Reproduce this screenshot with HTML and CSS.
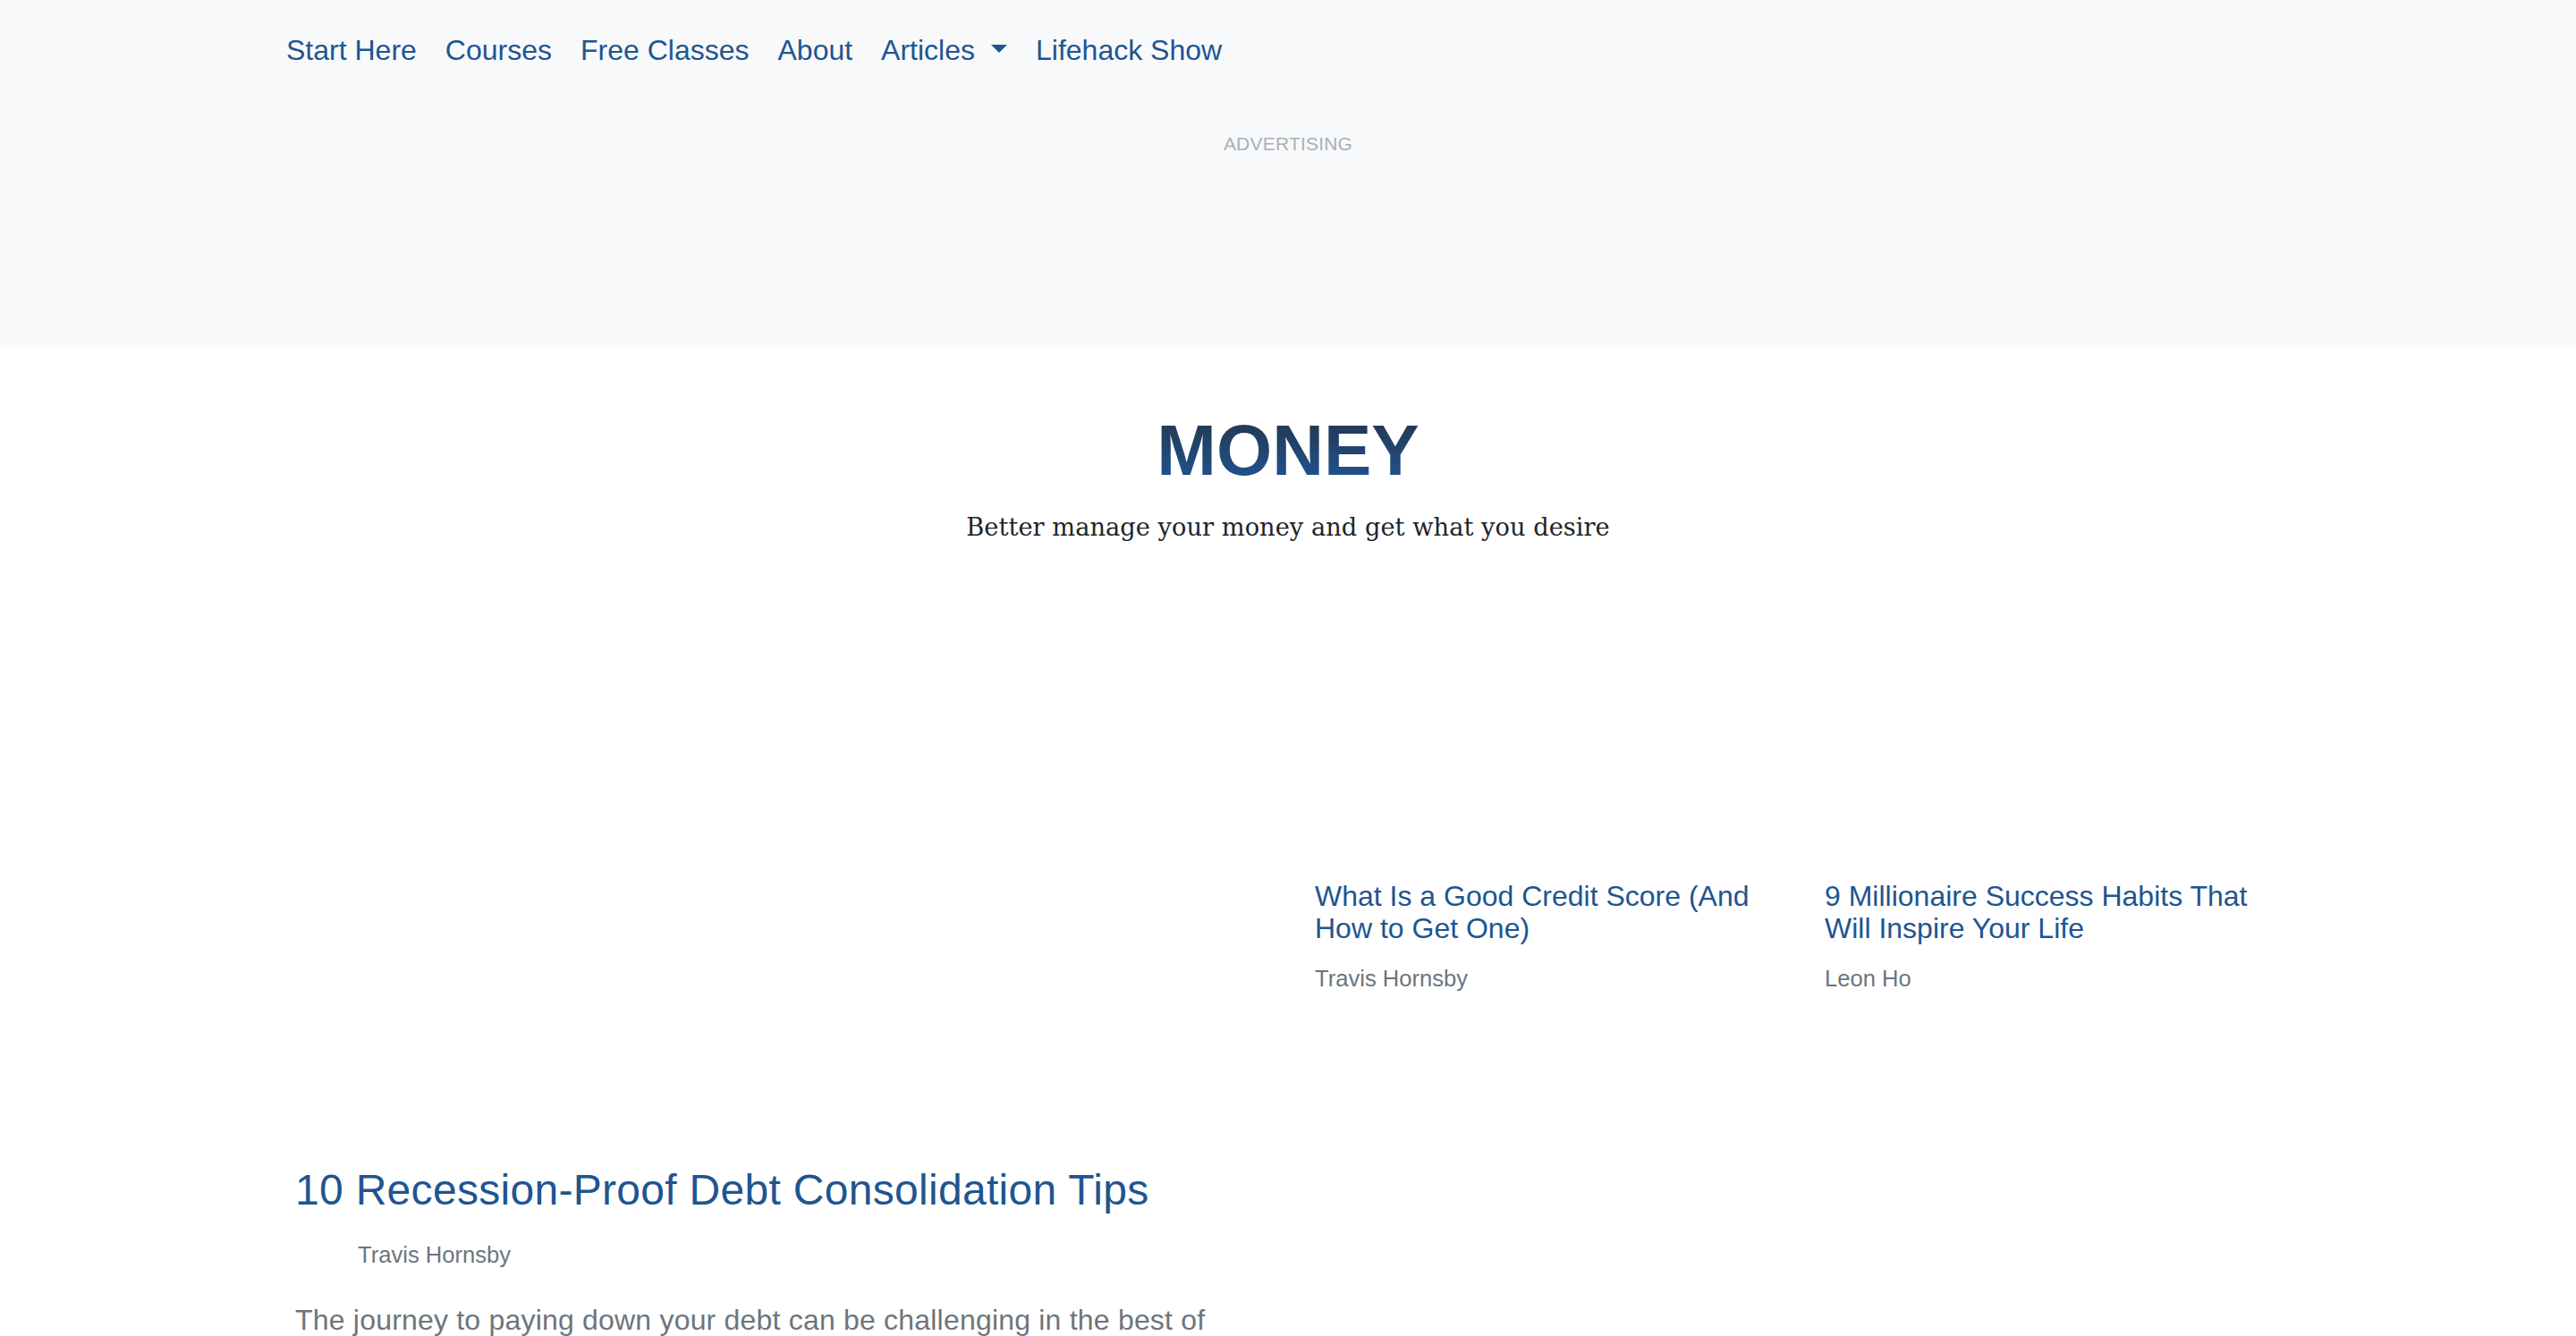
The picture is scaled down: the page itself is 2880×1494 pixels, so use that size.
FILE: index.html
```html
<!DOCTYPE html>
<html lang="en">
<head>
<meta charset="utf-8">
<title>Money - Lifehack</title>
<link rel="stylesheet" href="styles.css">
</head>
<body>
<header class="top-band">
  <nav class="container nav">
    <a class="nav-link" href="#">Start Here</a>
    <a class="nav-link" href="#">Courses</a>
    <a class="nav-link" href="#">Free Classes</a>
    <a class="nav-link" href="#">About</a>
    <a class="nav-link dropdown-toggle" href="#">Articles</a>
    <a class="nav-link" href="#">Lifehack Show</a>
  </nav>
  <div class="ad">
    <div class="ad-label">ADVERTISING</div>
    <div class="ad-space"></div>
  </div>
</header>
<main class="container">
  <h1 class="cat-title">MONEY</h1>
  <p class="cat-sub">Better manage your money and get what you desire</p>
  <div class="row">
    <article class="col-half featured">
      <div class="thumb thumb-lg"></div>
      <h2 class="feat-title"><a href="#">10 Recession-Proof Debt Consolidation Tips</a></h2>
      <div class="feat-author">Travis Hornsby</div>
      <p class="excerpt">The journey to paying down your debt can be challenging in the best of times, and even more so when the economy is uncertain.</p>
    </article>
    <div class="col-half cards">
      <article class="card">
        <div class="thumb thumb-sm"></div>
        <h3 class="card-title"><a href="#">What Is a Good Credit Score (And How to Get One)</a></h3>
        <div class="card-author">Travis Hornsby</div>
      </article>
      <article class="card">
        <div class="thumb thumb-sm"></div>
        <h3 class="card-title"><a href="#">9 Millionaire Success Habits That Will Inspire Your Life</a></h3>
        <div class="card-author">Leon Ho</div>
      </article>
    </div>
  </div>
</main>
</body>
</html>
```
FILE: styles.css
```css
* { box-sizing: border-box; }
html, body { margin: 0; padding: 0; }
body {
  font-family: "Liberation Sans", Arial, Helvetica, sans-serif;
  color: #212529;
  background: #fff;
  overflow: hidden;
}
a { text-decoration: none; color: #1e5591; }

.container {
  width: 2280px;
  margin: 0 auto;
  padding: 0 30px;
}

.top-band {
  background: #f8f9fa;
  padding-top: 32px;
}
.nav {
  display: flex;
  align-items: center;
  padding-left: 4px;
}
.nav-link {
  font-size: 32px;
  line-height: 48px;
  padding: 0 16px;
  color: #1e5591;
}
.dropdown-toggle::after {
  content: "";
  display: inline-block;
  margin-left: 18px;
  vertical-align: 8px;
  border-top: 9.6px solid #1e5591;
  border-left: 9.6px solid transparent;
  border-right: 9.6px solid transparent;
}

.ad {
  padding-top: 65px;
  text-align: center;
}
.ad-label {
  font-size: 21px;
  line-height: 31.5px;
  color: #a8b0b8;
  letter-spacing: 0.2px;
}
.ad-space { height: 211.5px; }

.cat-title {
  margin: 68px 0 0;
  text-align: center;
  font-size: 80px;
  line-height: 96px;
  font-weight: 700;
  background: linear-gradient(180deg, #243a57 20%, #1f518b 80%);
  -webkit-background-clip: text;
  background-clip: text;
  color: transparent;
  display: block;
}
.cat-sub {
  margin: 18px 0 0;
  text-align: center;
  font-family: "DejaVu Serif", "Liberation Serif", Georgia, serif;
  font-size: 27.3px;
  line-height: 40.5px;
  color: #212529;
}

.row {
  display: flex;
  margin: 40px -30px 0;
}
.col-half {
  width: 1140px;
  padding: 0 30px;
}
.cards {
  display: flex;
  padding: 0;
}
.card {
  width: 570px;
  padding: 0 30px;
}
.thumb { background: #fff; }
.thumb-lg { height: 631.5px; }
.thumb-sm { height: 313px; }

.feat-title {
  margin: 20px 0 0;
  font-size: 48px;
  line-height: 57.6px;
  font-weight: 400;
  letter-spacing: 0.3px;
}
.feat-author {
  margin: 24.7px 0 0 70px;
  font-size: 25.6px;
  line-height: 38.4px;
  color: #6c757d;
}
.excerpt {
  margin: 29.5px 0 0;
  font-size: 32px;
  line-height: 48px;
  color: #6c757d;
  letter-spacing: 0.2px;
}

.card-title {
  margin: 20px 0 0;
  font-size: 32px;
  line-height: 36px;
  font-weight: 400;
}
.card-author {
  margin-top: 19px;
  font-size: 25.6px;
  line-height: 38.4px;
  color: #6c757d;
}
```
